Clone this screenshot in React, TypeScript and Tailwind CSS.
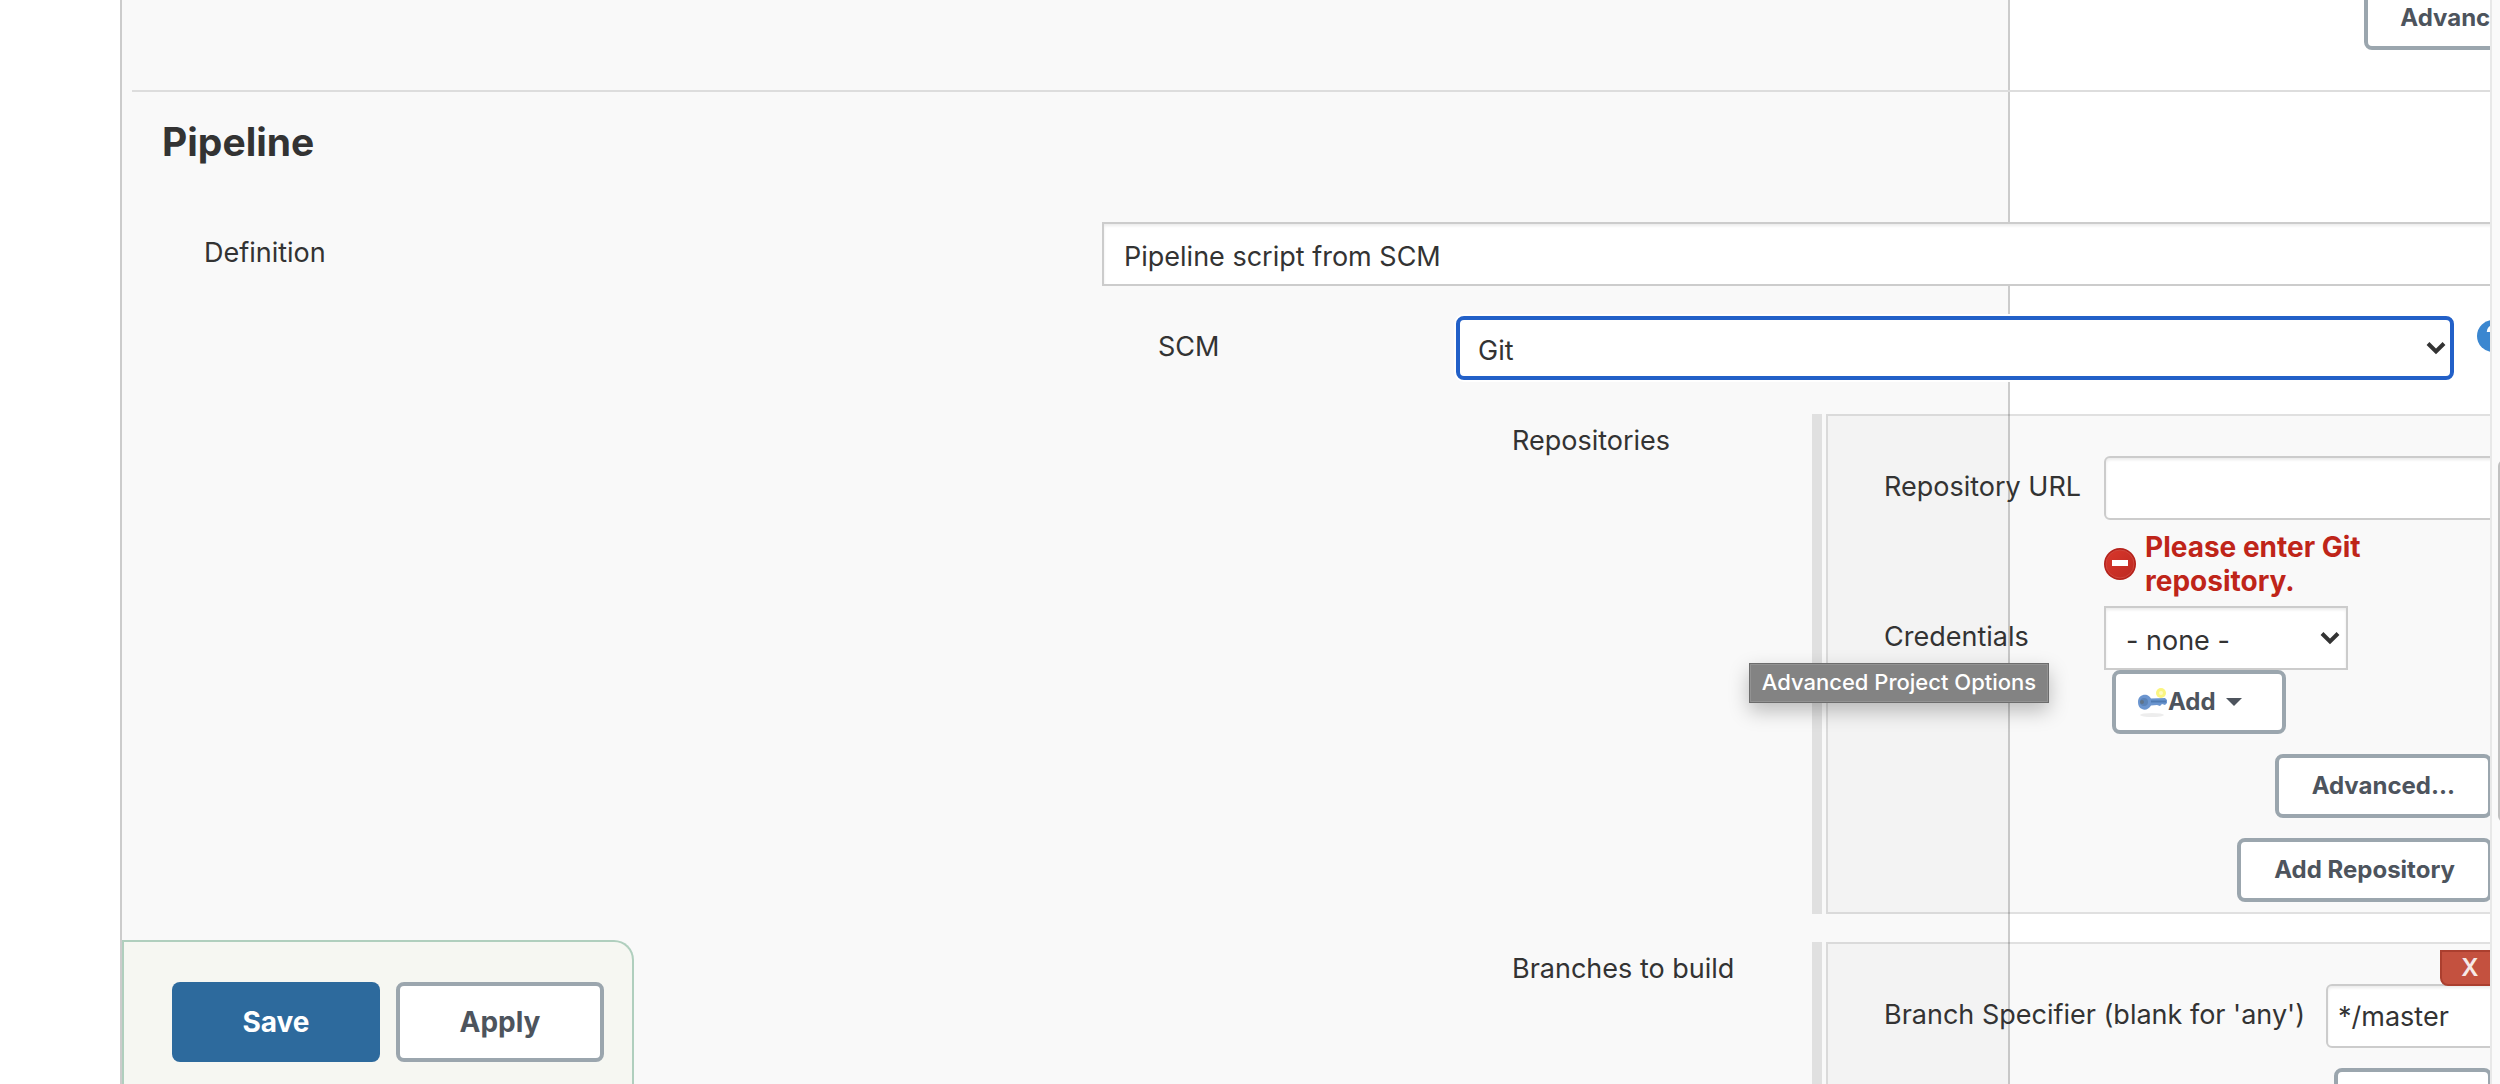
import type { ReactNode } from "react";

const labelText = "text-[27px] leading-[34px] text-[#333]";
const fieldLabel = `pl-14 pt-[14px] ${labelText}`;
const fieldFrame = "h-16 border-2 border-[#ccc] bg-white text-[27px] text-[#333] shadow-[inset_0_2px_3px_rgba(0,0,0,0.08)] outline-none";

function Chevron() {
  return (
    <svg aria-hidden="true" viewBox="0 0 20 14" className="pointer-events-none absolute right-2 top-[25px] h-[14px] w-5">
      <path d="M2 2.5 L10 10.5 L18 2.5" fill="none" stroke="#333" strokeWidth="4" />
    </svg>
  );
}

function OutlineButton({ children, className = "" }: { children: ReactNode; className?: string }) {
  return (
    <button
      type="button"
      className={`h-16 whitespace-nowrap rounded-lg border-4 border-[#9ba6ae] bg-white text-2xl font-bold text-[#4d545d] ${className}`}
    >
      {children}
    </button>
  );
}

function ErrorIcon() {
  return (
    <svg aria-hidden="true" viewBox="0 0 32 32" className="h-8 w-8 shrink-0">
      <defs>
        <linearGradient id="stop" x1="0" y1="0" x2="1" y2="1">
          <stop offset="0" stopColor="#d9362b" />
          <stop offset="1" stopColor="#bd2a22" />
        </linearGradient>
      </defs>
      <circle cx="16" cy="16" r="16" fill="#b5221b" />
      <circle cx="16" cy="16" r="14" fill="url(#stop)" stroke="#cf463c" strokeWidth="1" />
      <rect x="8" y="12" width="16" height="6" fill="#fff" />
    </svg>
  );
}

function KeyIcon() {
  return (
    <svg aria-hidden="true" viewBox="0 0 32 32" className="h-8 w-8 shrink-0">
      <ellipse cx="16" cy="29" rx="12" ry="2" fill="#000" opacity="0.07" />
      <circle cx="25" cy="7" r="5" fill="#fbf580" />
      <circle cx="25" cy="7" r="2" fill="#fffbc0" />
      <path d="M2 16 C2 10 7 8 11 9 C13 10 14 11 15 12.500 L29 12 L31 14 V17 L29 19 L26 18 L24 20 L21 19 L15 19.500 C13 23 9 25 6 23 C3 22 2 19 2 16Z" fill="#6b95cf" />
      <path d="M15 14.500 H30 V16.500 H15Z" fill="#4f7ab2" />
      <circle cx="8" cy="16" r="4" fill="#5a83b8" />
      <circle cx="6" cy="16" r="2" fill="#5f7389" />
    </svg>
  );
}

function HelpIcon() {
  return (
    <svg aria-hidden="true" viewBox="0 0 32 32" className="h-8 w-8">
      <circle cx="16" cy="16" r="16" fill="#3b87d0" />
      <path d="M11.500 12 C11.500 5.500 20.500 5.500 20.500 11.500 C20.500 15.500 16 15.500 16 19.500" fill="none" stroke="#fff" strokeWidth="3.500" />
      <circle cx="16" cy="24.500" r="2.200" fill="#fff" />
    </svg>
  );
}

function Repeatable({ title, children }: { title: string; children: ReactNode }) {
  return (
    <section className="grid grid-cols-[356px_1fr]">
      <h3 className={`pl-14 pt-[10px] ${labelText}`}>{title}</h3>
      <div className="flex gap-1">
        <div className="w-[10px] bg-[#e0e0e0]" />
        <div className="relative flex-1 border-2 border-black/[0.12] bg-black/[0.024] bg-clip-padding pb-[10px] pt-10">{children}</div>
      </div>
    </section>
  );
}

export default function App() {
  return (
    <div className="relative flex h-screen overflow-hidden bg-white font-[Inter,sans-serif]">
      <main className="min-w-0 flex-1 overflow-hidden pl-[120px]">
        <div className="mr-[480px] flow-root h-full border-x-2 border-[#ccc] bg-[#f9f9f9]">
          <div className="-mr-[572px] -mt-[14px] pl-[10px]">
            <div className="flex justify-end border-b-2 border-[#ddd] pb-10">
              <OutlineButton className="w-[216px]">Advanced...</OutlineButton>
            </div>

            <h2 className="pl-[30px] pt-[26px] text-[39px] font-bold leading-[48px] text-[#333]">Pipeline</h2>

            <div className="mt-14 grid grid-cols-[970fr_1478fr]">
              <label htmlFor="definition" className={`pl-[72px] pt-[14px] ${labelText}`}>Definition</label>
              <div>
                <select id="definition" className={`block w-full appearance-none rounded-none pl-5 pt-[6px] ${fieldFrame}`}>
                  <option>Pipeline script from SCM</option>
                </select>

                <div className="mt-[30px] grid grid-cols-[354px_1fr]">
                  <label htmlFor="scm" className={fieldLabel}>SCM</label>
                  <div className="flex gap-[23px] pr-[71px]">
                    <div className="relative flex-1">
                      <select
                        id="scm"
                        className="block h-16 w-full appearance-none rounded-lg border-4 border-[#2260c8] bg-white pl-[18px] pt-[6px] text-[27px] text-[#333] outline-none ring-2 ring-white"
                      >
                        <option>Git</option>
                      </select>
                      <Chevron />
                    </div>
                    <a href="#help" aria-label="Help for SCM" className="mt-1 h-8 w-8">
                      <HelpIcon />
                    </a>
                  </div>
                </div>

                <div className="ml-[354px] mt-[34px] flex flex-col gap-7">
                  <Repeatable title="Repositories">
                    <div className="grid grid-cols-[276px_1fr]">
                      <label htmlFor="repo-url" className={fieldLabel}>Repository URL</label>
                      <div>
                        <input id="repo-url" type="text" className={`block w-full rounded-md px-[10px] ${fieldFrame}`} />
                        <div className="flex max-w-[300px] items-center gap-[9px] pb-2 pt-[10px]">
                          <ErrorIcon />
                          <p className="text-[28px] font-bold leading-[34px] text-[#bf2519]">Please enter Git repository.</p>
                        </div>
                      </div>
                      <label htmlFor="credentials" className={fieldLabel}>Credentials</label>
                      <div>
                        <div className="relative w-[244px]">
                          <select id="credentials" className={`block w-full appearance-none rounded-none pl-5 pt-[6px] ${fieldFrame}`}>
                            <option>- none -</option>
                          </select>
                          <Chevron />
                        </div>
                        <OutlineButton className="ml-2 flex w-[174px] items-center pl-5">
                          <KeyIcon />
                          Add
                          <svg aria-hidden="true" viewBox="0 0 16 8" className="ml-[10px] h-2 w-4">
                            <path d="M0 0 H16 L8 8Z" fill="#4d545d" />
                          </svg>
                        </OutlineButton>
                      </div>
                    </div>
                    <div className="mt-5 flex flex-col items-end gap-5 pr-[86px]">
                      <OutlineButton className="px-[33px]">Advanced...</OutlineButton>
                      <OutlineButton className="px-[33px]">Add Repository</OutlineButton>
                    </div>
                  </Repeatable>

                  <Repeatable title="Branches to build">
                    <div className="grid grid-cols-[498px_1fr]">
                      <label htmlFor="branch" className={fieldLabel}>Branch Specifier (blank for 'any')</label>
                      <input id="branch" type="text" defaultValue="*/master" className={`block w-full rounded-md px-[10px] ${fieldFrame}`} />
                    </div>
                    <button
                      type="button"
                      aria-label="Delete branch"
                      className="absolute right-[78px] top-[6px] h-9 w-[60px] rounded-bl-lg border-2 border-[#ab3f2f] bg-[#c4513f] text-2xl font-semibold leading-8 text-[#f6e9e7]"
                    >
                      X
                    </button>
                    <div className="mt-5 flex justify-end pr-[86px]">
                      <OutlineButton className="w-[158px]">Add</OutlineButton>
                    </div>
                  </Repeatable>
                </div>
              </div>
            </div>
          </div>
        </div>
      </main>

      <div className="w-[10px] overflow-hidden border-l-2 border-[#e8e8e8] bg-[#fafafa] pl-[6px] pt-[460px]">
        <div className="h-[362px] w-3 rounded-full bg-[#c1c1c1]" />
      </div>

      <div className="absolute bottom-0 left-[122px] flex h-36 gap-4 rounded-tr-[20px] border-2 border-b-0 border-[#b0cfbe] bg-[#f6f7f2] pl-12 pr-7 pt-10">
        <button type="button" className="h-20 w-52 rounded-lg bg-[#2d6a9d] text-[28px] font-bold text-white">Save</button>
        <button type="button" className="h-20 w-52 rounded-lg border-4 border-[#9ba6ae] bg-white text-[28px] font-bold text-[#4d545d]">Apply</button>
      </div>

      <div role="tooltip" className="absolute left-[1749px] top-[663px] h-10 w-[300px] whitespace-nowrap border border-[#6c6c6c] bg-[#838383] text-center text-[22px] font-medium leading-9 text-white shadow-[inset_0_0_0_1px_#929292,0_8px_20px_rgba(0,0,0,0.25)]">
        Advanced Project Options
      </div>
    </div>
  );
}
